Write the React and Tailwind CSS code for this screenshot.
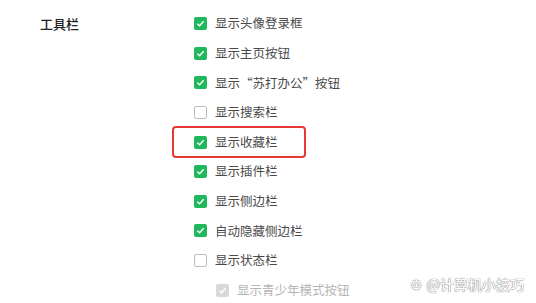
import React from "react";

const items = [
  { label: "显示头像登录框", checked: true },
  { label: "显示主页按钮", checked: true },
  { label: "显示“苏打办公”按钮", checked: true },
  { label: "显示搜索栏", checked: false },
  { label: "显示收藏栏", checked: true, highlight: true },
  { label: "显示插件栏", checked: true },
  { label: "显示侧边栏", checked: true },
  { label: "自动隐藏侧边栏", checked: true },
  { label: "显示状态栏", checked: false },
  { label: "显示青少年模式按钮", checked: true, disabled: true, indent: true },
];

const Box = ({ checked, disabled }) => {
  if (disabled) {
    return (
      <span className="w-[13px] h-[13px] rounded-[2px] bg-[#d9d9d9] flex items-center justify-center">
        <svg width="9" height="9" viewBox="0 0 10 10" fill="none">
          <path d="M1.5 5.2 L4 7.5 L8.5 2.5" stroke="#fff" strokeWidth="1.6" />
        </svg>
      </span>
    );
  }
  if (checked) {
    return (
      <span className="w-[13px] h-[13px] rounded-[2px] bg-[#1fb85c] flex items-center justify-center">
        <svg width="9" height="9" viewBox="0 0 10 10" fill="none">
          <path d="M1.5 5.2 L4 7.5 L8.5 2.5" stroke="#fff" strokeWidth="1.6" />
        </svg>
      </span>
    );
  }
  return <span className="w-[13px] h-[13px] rounded-[2px] border border-[#bdbdbd] bg-white" />;
};

const App = () => {
  return (
    <div className="relative w-[536px] h-[303px] bg-white overflow-hidden font-['Noto_Sans_CJK_SC','Noto_Sans',sans-serif]">
      <div className="flex pt-[9px]">
        {/* label */}
        <div className="w-[194px] pl-[40px] h-[29.6px] flex items-center">
          <span className="text-[13px] font-medium text-[#222]">工具栏</span>
        </div>

        {/* options */}
        <div className="flex flex-col">
          {items.map((item) => (
            <div
              key={item.label}
              className={`relative h-[29.6px] flex items-center gap-[8px] ${item.indent ? "pl-[22px]" : ""}`}
            >
              {item.highlight && (
                <div className="absolute left-[-22px] top-[-1px] w-[134px] h-[32px] border-2 border-[#e53a33] rounded-[4px]" />
              )}
              <Box checked={item.checked} disabled={item.disabled} />
              <span
                className={`text-[12.5px] ${item.disabled ? "text-[#b5b5b5]" : "text-[#4a4a4a]"}`}
              >
                {item.label}
              </span>
            </div>
          ))}
        </div>
      </div>

      {/* watermark */}
      <div className="absolute right-[12px] bottom-[8px] flex items-center gap-[3px] text-[14px] font-medium text-white [text-shadow:0_0_1px_#777,0_0_1px_#777]">
        <span>⚙</span>
        <span>@计算机小技巧</span>
      </div>
    </div>
  );
};

export default App;
